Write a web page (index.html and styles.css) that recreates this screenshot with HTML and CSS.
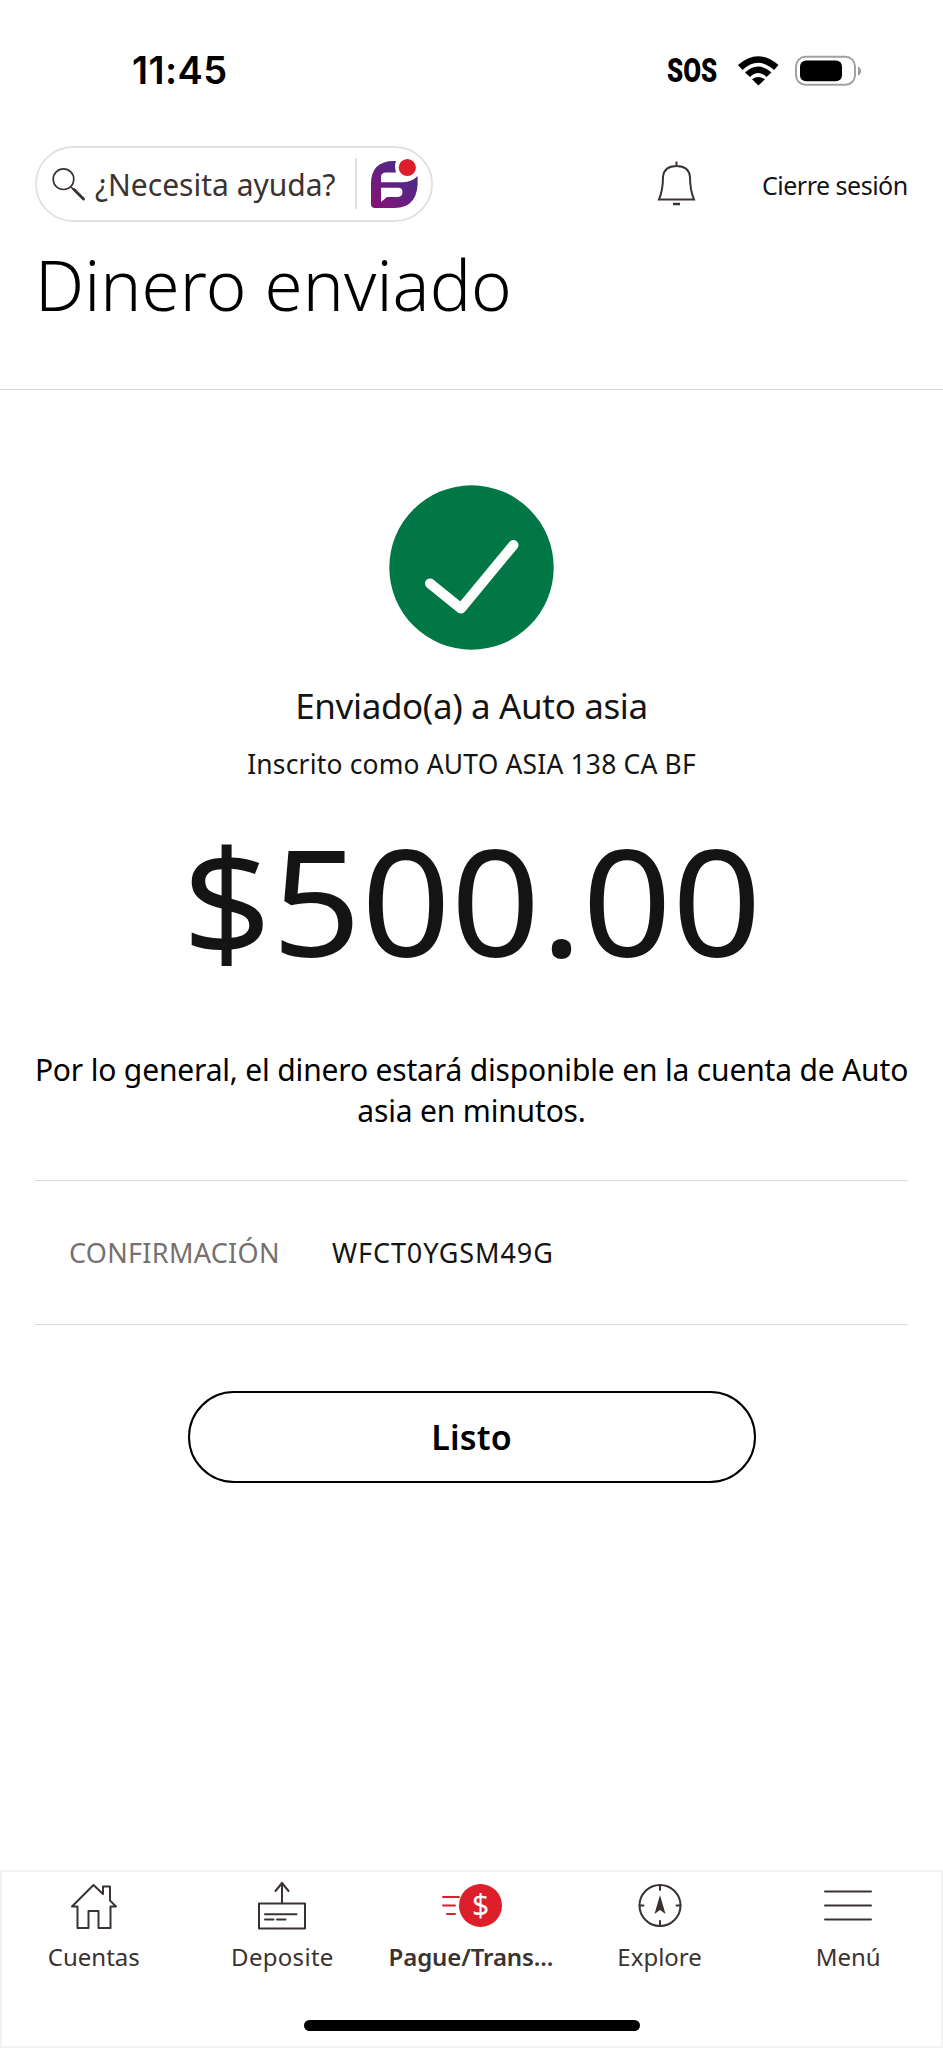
FILE: index.html
```html
<!DOCTYPE html>
<html lang="es">
<head>
<meta charset="utf-8">
<title>Dinero enviado</title>
<link rel="stylesheet" href="styles.css">
</head>
<body>
<main class="screen">
  <header class="status">
    <span class="time">11:45</span>
    <div class="indicators">
      <span class="sos"><span class="sos-text">SOS</span></span>
      <svg class="wifi" width="42" height="31" viewBox="737 53 42 31"><path d="M738 63Q758 45.500 778.500 63L774 68Q758 53.500 742.500 68Z"/><path d="M745 70.500Q758 58.500 771.500 70.500L766.500 75Q758 67 750 75Z"/><path d="M752 77.300Q758 72.500 765 77.300L758.400 83.500Z"/></svg>
      <svg class="battery" width="68" height="31" viewBox="794 53 68 31"><rect x="796" y="54.800" width="59" height="28" rx="9.500" fill="none" stroke="#a1a1a1" stroke-width="2"/><rect x="800" y="58.600" width="42" height="20.600" rx="6"/><path d="M858 64.500Q861 65.500 861 69T858 73.500Z" fill="#999"/></svg>
    </div>
  </header>

  <div class="toolbar">
    <div class="help">
      <svg class="search" width="34" height="34" viewBox="52 167 34 34"><circle cx="63.500" cy="179.200" r="10.300"/><path d="M71 187L74 190"/><path class="handle" d="M74 189.500L83.500 199"/></svg>
      <span class="help-text">¿Necesita ayuda?</span>
      <span class="help-rule"></span>
      <svg class="assistant" width="50" height="52" viewBox="370 158 50 52">
        <defs><linearGradient id="violet" x1="0" y1="1" x2="1" y2="0"><stop offset="0" stop-color="#8a1172"/><stop offset="1" stop-color="#3b3190"/></linearGradient></defs>
        <path fill="url(#violet)" d="M371 184Q371 161 394 161H396Q394 166 396 172.500H386Q381 172.500 381 177V182.300H403Q412 182 417.500 176Q420 208 394 208H375Q371 208 371 204Z"/>
        <path fill="#fff" d="M381 187.700H398Q402.500 187.700 402.500 192T398 197H387L381 202Z"/>
        <circle cx="407.300" cy="167.500" r="8.600" fill="#dc1f2a"/>
      </svg>
    </div>
    <svg class="bell" width="40" height="46" viewBox="656 162 40 46"><path d="M676.500 162.500V167M663 178Q664 167 676.500 167T690 178Q690 191 694 200.500H659Q663 191 663 178Z"/><path class="clapper" d="M673 205H680"/></svg>
    <span class="logout">Cierre sesión</span>
  </div>

  <h1 class="title">Dinero enviado</h1>

  <section class="result">
    <svg class="success" width="165" height="165" viewBox="0 0 165 165"><circle cx="82.500" cy="82.500" r="82.200"/><path d="M41 98.500L72 123.500L124.500 60"/></svg>
    <p class="sent">Enviado(a) a Auto asia</p>
    <p class="enrolled">Inscrito como AUTO ASIA 138 CA BF</p>
    <p class="amount">$500.00</p>
    <p class="note">Por lo general, el dinero estará disponible en la cuenta de Auto<br>asia en minutos.</p>
    <dl class="details"><dt>CONFIRMACIÓN</dt><dd>WFCT0YGSM49G</dd></dl>
    <button class="done">Listo</button>
  </section>

  <nav class="tabs">
    <div class="tab"><svg width="48" height="46" viewBox="70 1884 48 46"><path d="M72 1907.500L93.500 1886L103 1895V1887.500H110V1901.500L116 1907.500H110.500V1929H98.500V1912H88.500V1929H77.500V1907.500Z"/></svg><span>Cuentas</span></div>
    <div class="tab deposit"><svg width="50" height="46" viewBox="257.500 1884 50 46"><path d="M259.500 1904.500H305.500V1929.500H259.500ZM282.500 1904V1884M276 1892L282.500 1884L289 1892M265.500 1915.300H297M265.500 1920.500H274M277.500 1920.500H286"/></svg><span>Deposite</span></div>
    <div class="tab active"><svg width="62" height="46" viewBox="440 1884 62 46"><circle cx="480.500" cy="1906.500" r="21.500"/><path d="M443 1898H459M443 1906.500H455M447 1915H455"/><text x="480.500" y="1917">$</text></svg><span>Pague/Trans...</span></div>
    <div class="tab"><svg width="46" height="46" viewBox="636.500 1884 46 46"><circle cx="659.500" cy="1906.500" r="20.500"/><path d="M659.500 1886V1891M659.500 1922V1927M639 1906.500H643M676 1906.500H680"/><path class="needle" d="M659.500 1896L665 1915L659.500 1911L654 1915Z"/></svg><span>Explore</span></div>
    <div class="tab"><svg width="50" height="46" viewBox="823 1884 50 46"><path d="M825 1892.500H871M825 1906.500H871M825 1920.500H871"/></svg><span>Menú</span></div>
    <div class="home-bar"></div>
  </nav>
</main>
</body>
</html>
```
FILE: styles.css
```css
* { box-sizing: border-box; }
body { margin: 0; background: #fff; color: #141414; font-family: "Noto Sans", "Open Sans", sans-serif; }
p, h1, dl, dd { margin: 0; }
p, span { white-space: nowrap; }
svg { display: block; flex: none; overflow: visible; }

.screen { width: 943px; height: 2048px; display: flex; flex-direction: column; }

.status { height: 140px; padding: 0 81px 0 132px; display: flex; align-items: center; justify-content: space-between; color: #000; }
.time { font: 600 38px/44px Inter, sans-serif; letter-spacing: .4px; }
.indicators { display: flex; align-items: center; gap: 15px; }
.sos { width: 51px; display: block; margin-right: 4px; }
.sos-text { display: inline-block; font: 900 34px/40px Roboto, sans-serif; transform: scaleX(.76); transform-origin: left; }

.toolbar { height: 83px; margin-top: 2px; padding: 0 36px 0 35px; display: flex; align-items: center; flex: none; }
.help { width: 398px; height: 76px; border: 2px solid #e6e1e1; border-radius: 38px; display: flex; align-items: center; padding: 0 11px 0 15px; }
.help-text { color: #3b3331; font-size: 30px; line-height: 40px; width: 243px; margin: 2px 0 0 9px; }
.help-rule { width: 2px; height: 51px; background: #e2dede; margin: 0 13px 0 19px; }
.search { fill: none; stroke: #3b3331; stroke-width: 1.7; }
.handle { stroke-width: 3; stroke-linecap: round; }
.bell { margin-left: 223px; fill: none; stroke: #3b3331; stroke-width: 2; }
.clapper { stroke-width: 2.5; }
.logout { margin: 2px 0 0 66px; font-size: 25px; line-height: 34px; letter-spacing: -.5px; }

.title { height: 165px; padding: 12px 0 0 35px; border-bottom: 1px solid #d8d8d8; color: #000; font-weight: 300; font-size: 69px; line-height: 94px; letter-spacing: .1px; flex: none; }

.result { display: flex; flex-direction: column; align-items: center; padding: 95px 35px 0; flex: 1; }
.success { fill: #007744; }
.success path { fill: none; stroke: #fff; stroke-width: 10; stroke-linecap: round; stroke-linejoin: round; }
.sent { margin-top: 32px; font-size: 35px; line-height: 48px; letter-spacing: -.37px; }
.enrolled { margin-top: 16px; font-size: 26.4px; line-height: 36px; letter-spacing: .2px; }
.amount { margin-top: 18px; font-size: 148px; line-height: 200px; transform: scaleX(1.058); }
.note { margin-top: 48.5px; font-size: 30px; line-height: 41.5px; letter-spacing: -.17px; color: #000; text-align: center; }
.details { margin-top: 48.5px; width: 873px; height: 145px; border: solid #dcdcdc; border-width: 1px 0; display: flex; align-items: center; padding-left: 34px; font-size: 27px; line-height: 36px; }
.details dt { width: 263px; color: #76706f; letter-spacing: .3px; }
.details dd { letter-spacing: .9px; }
.done { margin-top: 66px; width: 568px; height: 92px; border: 2px solid #000; border-radius: 46px; background: #fff; color: #000; font: 600 34px/46px "Noto Sans", sans-serif; letter-spacing: .2px; }

.tabs { height: 178px; padding-top: 2px; box-shadow: inset 0 0 0 2px #f3f1f1; display: grid; grid-template-columns: repeat(5, 1fr); grid-template-rows: 148px 1fr; color: #3b3331; font-size: 24px; line-height: 34px; flex: none; }
.tab { display: grid; grid-template-rows: 57px 34px; padding: 11px 1px 0 0; align-content: start; justify-items: center; }
.tab svg { fill: none; stroke: #3b3331; stroke-width: 2; stroke-linejoin: round; stroke-linecap: round; }
.tab .needle { fill: #3b3331; stroke: none; }
.deposit { letter-spacing: .3px; }
.active { font-weight: 600; letter-spacing: -.1px; }
.active circle { fill: #dc1f2a; stroke: none; }
.active path { stroke: #dc1f2a; }
.active text { fill: #fff; stroke: none; font-size: 30px; font-weight: 400; text-anchor: middle; letter-spacing: 0; }
.home-bar { grid-column: 1 / -1; justify-self: center; width: 336px; height: 11px; border-radius: 6px; background: #000; }
```
